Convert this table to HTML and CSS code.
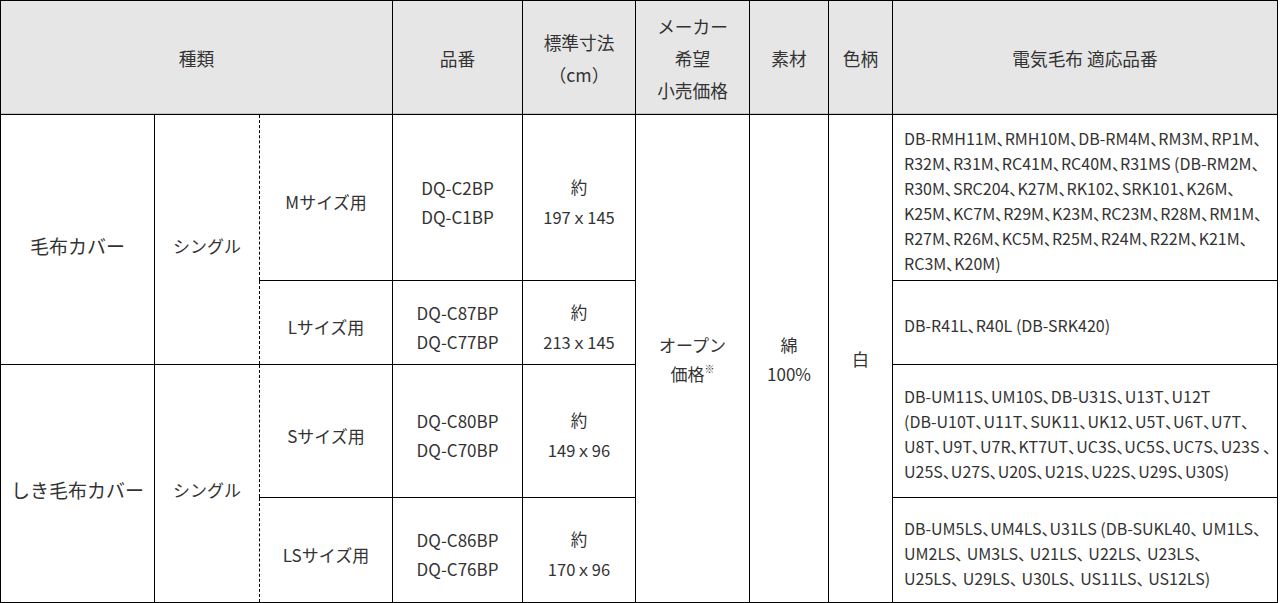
FILE: index.html
```html
<!DOCTYPE html>
<html lang="ja">
<head>
<meta charset="utf-8">
<title>毛布カバー 適応品番</title>
<link rel="stylesheet" href="styles.css">
</head>
<body>
<table class="spec">
  <colgroup>
    <col class="c-kind">
    <col class="c-size">
    <col class="c-sub">
    <col class="c-part">
    <col class="c-dim">
    <col class="c-price">
    <col class="c-mat">
    <col class="c-color">
    <col class="c-fit">
  </colgroup>
  <thead>
    <tr class="r-head">
      <th colspan="3">種類</th>
      <th>品番</th>
      <th>標準寸法<br>（cm）</th>
      <th>メーカー<br>希望<br>小売価格</th>
      <th>素材</th>
      <th>色柄</th>
      <th>電気毛布 適応品番</th>
    </tr>
  </thead>
  <tbody>
    <tr class="r-m">
      <td rowspan="2" class="kind">毛布カバー</td>
      <td rowspan="2" class="bed">シングル</td>
      <td class="sub">Mサイズ用</td>
      <td class="mid">DQ-C2BP<br>DQ-C1BP</td>
      <td class="mid dim">約<br>197ｘ145</td>
      <td rowspan="4" class="mid span">オープン<br>価格<span class="note">※</span></td>
      <td rowspan="4" class="mid span">綿<br>100%</td>
      <td rowspan="4" class="mid span">白</td>
      <td class="fit">DB-RMH11M、RMH10M、DB-RM4M、RM3M、RP1M、<br>R32M、R31M、RC41M、RC40M、R31MS (DB-RM2M、<br>R30M、SRC204、K27M、RK102、SRK101、K26M、<br>K25M、KC7M、R29M、K23M、RC23M、R28M、RM1M、<br>R27M、R26M、KC5M、R25M、R24M、R22M、K21M、<br>RC3M、K20M)</td>
    </tr>
    <tr class="r-l">
      <td class="sub">Lサイズ用</td>
      <td class="mid">DQ-C87BP<br>DQ-C77BP</td>
      <td class="mid dim">約<br>213ｘ145</td>
      <td class="fit">DB-R41L、R40L (DB-SRK420)</td>
    </tr>
    <tr class="r-s">
      <td rowspan="2" class="kind">しき毛布カバー</td>
      <td rowspan="2" class="bed">シングル</td>
      <td class="sub">Sサイズ用</td>
      <td class="mid">DQ-C80BP<br>DQ-C70BP</td>
      <td class="mid dim">約<br>149ｘ96</td>
      <td class="fit">DB-UM11S、UM10S、DB-U31S、U13T、U12T<br>(DB-U10T、U11T、SUK11、UK12、U5T、U6T、U7T、<br>U8T、U9T、U7R、KT7UT、UC3S、UC5S、UC7S、U23S 、<br>U25S、U27S、U20S、U21S、U22S、U29S、U30S)</td>
    </tr>
    <tr class="r-ls">
      <td class="sub">LSサイズ用</td>
      <td class="mid">DQ-C86BP<br>DQ-C76BP</td>
      <td class="mid dim">約<br>170ｘ96</td>
      <td class="fit">DB-UM5LS、UM4LS、U31LS (DB-SUKL40、 UM1LS、<br>UM2LS、 UM3LS、 U21LS、 U22LS、 U23LS、<br>U25LS、 U29LS、 U30LS、 US11LS、 US12LS)</td>
    </tr>
  </tbody>
</table>
</body>
</html>
```

FILE: styles.css
```css
html, body {
  margin: 0;
  padding: 0;
  background: #fff;
}

body {
  font-family: "Noto Sans CJK JP", "Noto Sans", sans-serif;
  color: #333;
  font-size: 16px;
}

.spec {
  border-collapse: collapse;
  table-layout: fixed;
  width: 1278px;
}

.c-kind { width: 154px; }
.c-size { width: 105px; }
.c-sub { width: 133px; }
.c-part { width: 130px; }
.c-dim { width: 113px; }
.c-price { width: 114px; }
.c-mat { width: 79px; }
.c-color { width: 64px; }
.c-fit { width: 385px; }

.spec th,
.spec td {
  border: 1px solid #000;
  padding: 0;
  text-align: center;
  vertical-align: middle;
}

.spec th {
  background: #e6e6e6;
  font-weight: normal;
  font-size: 17.7px;
  line-height: 32px;
  box-shadow: inset 0 -1px 0 #c4c4c4;
}

.r-head { height: 114px; }
.r-m { height: 166px; }
.r-l { height: 84px; }
.r-s { height: 133px; }
.r-ls { height: 105px; }

.spec td {
  font-size: 17px;
  line-height: 29px;
  padding-top: 8px;
}

.spec td.dim {
  font-size: 16.5px;
  line-height: 30px;
}

.spec td.span {
  padding-top: 0;
}

.spec td.kind {
  font-size: 19px;
  padding-top: 12px;
}

.spec td.bed {
  border-right: 1px dashed #000;
  padding-top: 12px;
}

.spec td.sub {
  border-left: 1px dashed #000;
}

.spec td.fit {
  font-size: 16px;
  text-align: left;
  line-height: 25px;
  padding: 6px 8px 0 11px;
  white-space: nowrap;
  font-feature-settings: "palt";
}

.note {
  font-size: 10px;
  vertical-align: top;
  line-height: 20px;
}
```
